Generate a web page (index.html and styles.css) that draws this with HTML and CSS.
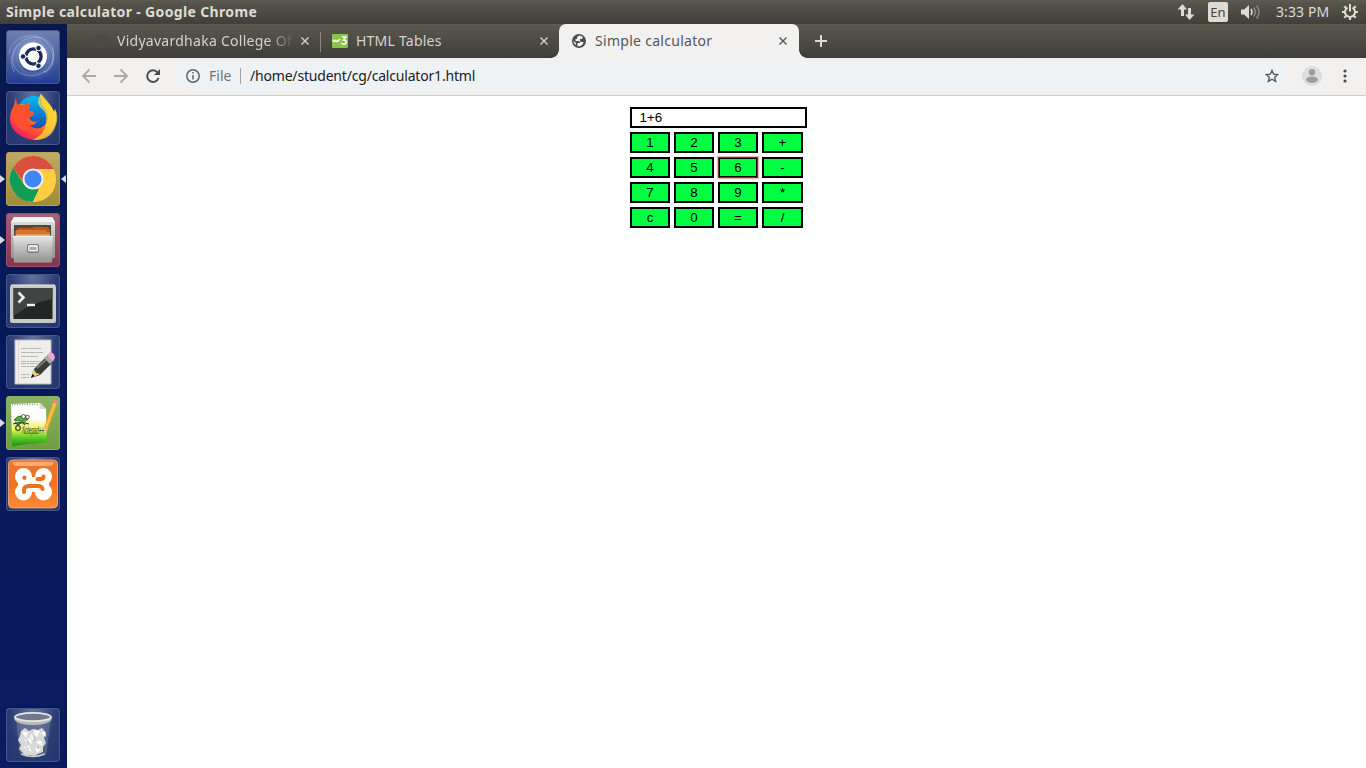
FILE: index.html
```html
<!DOCTYPE html>
<html lang="en">
<head>
<meta charset="utf-8">
<title>Simple calculator</title>
<link rel="stylesheet" href="styles.css">
</head>
<body>
<header class="panel">
  <div class="panel-title">Simple calculator - Google Chrome</div>
  <div class="indicators">
    <svg class="net" width="18" height="18" viewBox="0 0 18 18"><path d="M5.5 1 10 6.500H7V13H4V6.500H.500ZM11 5h3v6.500h3.500L12.500 17 8 11.500h3Z" fill="#dfdbd2"/></svg>
    <span class="lang">En</span>
    <svg class="vol" width="20" height="16" viewBox="0 0 20 16"><path d="M0 5.500h3L8 1v14L3 10.500H0Z" fill="#dfdbd2"/><g fill="none" stroke-width="1.500"><path d="M10 5q2 3 0 6" stroke="#dfdbd2"/><path d="M12.500 3.500q4 4.500 0 9M15.500 1.500q5 6.500 0 13" stroke="#8d8980"/></g></svg>
    <span class="clock">3:33 PM</span>
    <svg class="gear" width="16" height="16" viewBox="0 0 16 16"><g fill="none" stroke="#dfdbd2"><path d="M5.500 3.600a5 5 0 1 0 5 0" stroke-width="2"/><path d="M8 0v7.500" stroke-width="2"/><path d="M0 8h3m10 0h3M8 13v3M2.300 2.300l2 2m7.400 0 2-2M2.300 13.700l2-2m7.400 0 2 2" stroke-width="2.200"/></g></svg>
  </div>
</header>
<div class="desktop">
  <nav class="launcher">
    <div class="tile dash">
      <svg viewBox="0 0 54 54"><defs><radialGradient id="glow"><stop offset=".3" stop-color="#b9c6e8"/><stop offset="1" stop-color="#5b72b5" stop-opacity="0"/></radialGradient></defs><circle cx="27" cy="25" r="27" fill="url(#glow)" opacity=".7"/><g fill="none" stroke="#b7c4e4" stroke-opacity=".45"><path d="M3 24C5 5 31 0 41 13s7 28-4 29M46 17c6 17-9 32-26 28S4 23 14 13M8 42C-1 20 17 3 36 8M29 7c20 1 25 22 10 36"/></g><circle cx="27" cy="28" r="14.500" fill="#26428b" opacity=".5"/><circle cx="27" cy="26.500" r="14" fill="#fff"/><circle cx="27.500" cy="26.500" r="7.600" fill="none" stroke="#1c2c5c" stroke-width="3.400"/><g stroke="#fff" stroke-width="1.300"><path d="m27.500 26.500-10 0m10 0 5-9m-5 9 5 9"/></g><circle cx="27.500" cy="26.500" r="5.500" fill="#fff"/><g fill="#1c2c5c" stroke="#fff"><circle cx="17" cy="26.500" r="2.800"/><circle cx="32.500" cy="18" r="2.800"/><circle cx="32.500" cy="35.800" r="2.800"/></g></svg>
    </div>
    <div class="tile">
      <svg viewBox="0 0 54 54"><defs><linearGradient id="fox" x1=".9" y1="0" x2=".2" y2="1"><stop stop-color="#fff44f"/><stop offset=".4" stop-color="#ffac20"/><stop offset=".65" stop-color="#ff5b26"/><stop offset="1" stop-color="#f0136f"/></linearGradient><linearGradient id="globe" x2="0" y2="1"><stop stop-color="#00b9f5"/><stop offset="1" stop-color="#2044b0"/></linearGradient></defs><circle cx="28" cy="22" r="17" fill="url(#globe)"/><path d="M10 7q-1 5 2 7 4-2 7 0l5-3q-2 6-1 9l5 1q1 3-5 5 0 4 6 5l2-1q-2 5-8 4 8 7 16 0 5-6 2-14-6-7-5-12Q33 5 35 3q1 3 4 6 7 7 9 12l1-3q4 15-6 25-12 10-26 3C3 39 1 26 8 15Z" fill="url(#fox)"/><path d="M35 3q-6 8 0 14 7 5 5 15-1 11-13 17 18 1 23-15 3-9-1-16l-1 3Q46 14 35 3Z" fill="#ffd83a" opacity=".75"/><path d="m10 7 1 7q4-1 7 0l6-3q-2 6-1 9l5 1q1 3-5 5-2 6 3 11-9 5-15-2Q5 28 8 15Z" fill="#ff502e"/></svg>
    </div>
    <div class="tile gold running focused">
      <svg viewBox="0 0 54 54"><circle cx="27" cy="27" r="23" fill="#ffcd40"/><path d="M27 17H47.700A23 23 0 0 0 7 15.500l11 16Z" fill="#d85140"/><path d="m7 15.500 11 17 15 5-6 12.500A23 23 0 0 1 7 15.500Z" fill="#0f9d58"/><path d="M27 17h20.700q7 25-14 32l-7 1 9-18Z" fill="#ffcd40"/><circle cx="27" cy="27" r="10.500" fill="#f1f1f1"/><circle cx="27" cy="27" r="8.500" fill="#4285f4"/></svg>
    </div>
    <div class="tile rose running">
      <svg viewBox="0 0 54 54"><defs><linearGradient id="steel" x2="0" y2="1"><stop stop-color="#e5e5e3"/><stop offset="1" stop-color="#929290"/></linearGradient></defs><path d="M8 4h38l3 5v36H5V9Z" fill="url(#steel)"/><path d="M8 4h38l3 5H5Z" fill="#f2f2f0"/><path d="M8 12h37v12H8Z" fill="#4d4641"/><path d="m9 18 4-3h13l2-1h14l2 4v6H9Z" fill="#bd5418"/><path d="M10 20h34M10 18h30" stroke="#f29340" stroke-width="1"/><path d="M10 21.500h34V24H10Z" fill="#ffd396"/><path d="M6.500 23h41l-2 26h-37Z" fill="url(#steel)" stroke="#a3a3a1"/><path d="M6.500 23.500h41" stroke="#eee"/><rect x="21" y="31" width="12" height="9" rx="2" fill="#777"/><rect x="22" y="32" width="10" height="6.500" rx="1.500" fill="#eee"/><rect x="23.500" y="34" width="7" height="3" fill="#aaa"/></svg>
    </div>
    <div class="tile">
      <svg viewBox="0 0 54 54"><rect x="4" y="11" width="46" height="38" rx="2" fill="#c9c9c5"/><path d="M5 11h44" stroke="#eee"/><rect x="7.500" y="14" width="39" height="31" fill="#232625"/><path d="M7.500 14h39v11q-22 4-39 17Z" fill="#424444"/><path d="m12.500 18.500 5 5-5 5" fill="none" stroke="#f4f4f4" stroke-width="2.600"/><path d="M21 31h8" stroke="#f4f4f4" stroke-width="2.400"/></svg>
    </div>
    <div class="tile">
      <svg viewBox="0 0 54 54"><path d="M9 5h36v44H9Z" fill="#eeeeeb" stroke="#bbb"/><path d="M12.500 5v44" stroke="#f0bcbc" stroke-width=".7"/><path d="M15 13.500h20M15 17.500h22M15 21.500h17M15 26.500h20M15 28.500h23M15 31.500h19M15 39.500h9M15 42.500h8" stroke="#b5b5b5" stroke-dasharray="5 .5 3 .5"/><path d="m25 43 3-9 13-13 6 6-13 13Z" fill="#393b37"/><path d="m31 33 12-11" stroke="#777" stroke-width="2"/><path d="m25 43 3-9 2 4 4 1Z" fill="#e9d66d"/><path d="m25 43 1.500-4 2 2Z"/><path d="m38 23 4-4 6 6-4 4Z" fill="#aaa"/><path d="m41 20 3-3q4 0 5 6l-2 3Z" fill="#f3a6cf"/></svg>
    </div>
    <div class="tile green running">
      <svg viewBox="0 0 54 54"><defs><linearGradient id="grass" x2="0" y2="1"><stop offset=".35" stop-color="#fff"/><stop offset=".62" stop-color="#e4f252"/><stop offset=".8" stop-color="#62cc2a"/><stop offset="1" stop-color="#16930b"/></linearGradient></defs><path d="m5 8 29-1 6 6 1 33-35 4Z" fill="url(#grass)"/><path d="M33.500 7v6H40Z" fill="#d5dcd3"/><path d="M6 8.500h27" stroke="#999" stroke-width="1.500" stroke-dasharray="1 1.500"/><path d="M8 24q4-5 9-4 4-1 5 3-2 3-6 2-5 0-8-1Z" fill="#59ad38" stroke="#2c6e27"/><circle cx="17.500" cy="20.500" r="2" fill="#fff" stroke="#333" stroke-width=".8"/><circle cx="21.500" cy="21" r="1.800" fill="#fff" stroke="#333" stroke-width=".8"/><path d="M7 28q8-3 16 0M9 26l3 3 4-3 3 3" fill="none" stroke="#38512f" stroke-width="1.300"/><circle cx="12" cy="32" r="2.300" fill="none" stroke="#38512f" stroke-width="1.300"/><text x="16" y="38" class="note-name" textLength="22" lengthAdjust="spacingAndGlyphs">Notepad++</text><path d="m38 32 9-26 4 2-9 25-4 4Z" fill="#f6a829"/><path d="m40 32 9-25" stroke="#ffda65"/><path d="m47 6 1-3 4 2-1 3Z" fill="#e6858b"/><path d="m38 32 0 6 4-5Z" fill="#e9ca99"/></svg>
    </div>
    <div class="tile">
      <svg viewBox="0 0 54 54"><defs><linearGradient id="orange" x2="0" y2="1"><stop stop-color="#e9792f"/><stop offset=".5" stop-color="#f4701f"/><stop offset="1" stop-color="#fb8b38"/></linearGradient></defs><rect x="2.500" y="3" width="49" height="48" rx="4" fill="url(#orange)" stroke="#dba47f"/><path d="M7 5h40q1 3-3 4H10Q6 8 7 5Z" fill="#ffc092" opacity=".7"/><g fill="#fff"><circle cx="17.500" cy="19.500" r="8.500"/><circle cx="37.500" cy="19.500" r="8.500"/><circle cx="17.500" cy="35" r="8.500"/><circle cx="37.500" cy="35" r="8.500"/><path d="M12 20h31v15H12Z"/></g><path d="M18.500 20.500v.5M31.500 22h3q3 0 3-2.500M18 35v-2q0-4 5-4h9q4 0 4.500 3" fill="none" stroke="#f4701f" stroke-width="4" stroke-linecap="round"/></svg>
    </div>
    <div class="tile trash">
      <svg viewBox="0 0 54 54"><path d="m11 12 3 33q13 7 26 0l4-33Z" fill="#96a6bf" opacity=".3" stroke="#a8b5cb"/><path d="m15 23 4-3 4 3 4-2 5 1 4-2 4 5-2 5 2 5-3 4v5l-5 2-4 2-4-1-5 1-3-4-3-3 2-4-3-5 2-4Z" fill="#d8dad9"/><g fill="#fbfbf9"><path d="m16 24 6 0-2 6Zm12-2 6 1-3 6-3-2Zm7 3 4-2 1 6ZM18 32l7-3 1 7Zm12 2 7-3-2 7Zm-13 5 6-1 3 6Zm12 1 6 1-4 4Zm-3-14-3 4 5 2Z"/></g><path d="m21 31 2 5m5-9 1 6m5-2 3 2m-17 6 3 2m10-4-1 4" stroke="#b4b9bb"/><ellipse cx="27" cy="9" rx="18.500" ry="4.500" fill="#6f7990"/><path d="M8.500 8v4q4 5 18.500 5t18.500-5V8q-4 5-18.500 5T8.500 8Z" fill="#babcb9"/><ellipse cx="27" cy="9" rx="18" ry="4.200" fill="none" stroke="#e5e6e3" stroke-width="1.800"/><path d="M15 46q12 5 24 0" fill="none" stroke="#c7cac9" stroke-width="1.500"/></svg>
    </div>
  </nav>
  <main class="browser">
    <div class="tabs">
      <div class="tab tab-college">
        <span class="loading"></span><span class="tab-label college">Vidyavardhaka College Of</span>
        <svg class="close" viewBox="0 0 8 8"><path d="m.5.5 7 7m0-7-7 7"/></svg>
      </div>
      <div class="tab tab-tables">
        <svg class="w3" viewBox="0 0 16 14"><rect width="16" height="14" rx="1" fill="#8bc34a"/><path d="M1 5.500v1q1 2 2.500 0V5.500v1q2 2 3 0L8 5M10 3h4l-2.500 3q3.500 0 2.500 3Q12 11.500 9.500 9" fill="none" stroke="#fff" stroke-width="1.400"/></svg>
        <span class="tab-label tables">HTML Tables</span>
        <svg class="close" viewBox="0 0 8 8"><path d="m.5.5 7 7m0-7-7 7"/></svg>
      </div>
      <div class="tab active">
        <svg class="world" viewBox="0 0 14 14"><circle cx="7" cy="7" r="7" fill="#4b4d4f"/><path d="M7.500 1.500 5 3v2H3.500v2H7l1 1v1H5.500v3q5 1 6-4H9L8 7V5h2l1-2Q9 1.500 7.500 1.500ZM1.500 7 4 9v2Q1 9 1.500 7Z" fill="#f2f1f0"/></svg>
        <span class="tab-label simple">Simple calculator</span>
        <svg class="close" viewBox="0 0 8 8"><path d="m.5.5 7 7m0-7-7 7"/></svg>
      </div>
      <svg class="plus" viewBox="0 0 12 12"><path d="M6 0v12M0 6h12"/></svg>
    </div>
    <div class="toolbar">
      <svg class="nav-icons" width="82" height="16" viewBox="0 0 82 16"><g fill="none" stroke="#aaa9a7" stroke-width="1.800"><path d="M15 8H2m6.500-6.500L2 8l6.500 6.500M33 8h13m-6.500-6.500L46 8l-6.500 6.500"/></g><path d="M76.500 4.500A5.800 5.800 0 1 0 77.500 10" fill="none" stroke="#4d4e50" stroke-width="2"/><path d="M79 1v6h-6Z" fill="#4d4e50"/></svg>
      <div class="omnibox">
        <svg class="info" width="14" height="14" viewBox="0 0 14 14"><circle cx="7" cy="7" r="6.200" fill="none" stroke="#5f6368" stroke-width="1.500"/><path d="M7 6v4.500M7 3v1.600" stroke="#5f6368" stroke-width="1.500"/></svg>
        <span class="scheme">File</span><span class="divider"></span><span class="url">/home/student/cg/calculator1.html</span>
        <svg class="star" width="14" height="14" viewBox="0 0 14 14"><path d="m7 1.500 1.700 3.700 4 .4-3 2.700.9 4L7 10.200l-3.600 2.100.9-4-3-2.700 4-.4Z" fill="none" stroke="#54575b" stroke-width="1.400"/></svg>
      </div>
      <svg class="avatar" width="20" height="20" viewBox="0 0 20 20"><circle cx="10" cy="10" r="10" fill="#dedddd"/><circle cx="10" cy="6.200" r="3.200" fill="#9d9d9d"/><ellipse cx="10" cy="13.700" rx="5.800" ry="3.100" fill="#9d9d9d"/></svg>
      <svg class="menu" width="4" height="14" viewBox="0 0 4 14"><g fill="#4c4d4f"><circle cx="2" cy="2" r="1.600"/><circle cx="2" cy="7" r="1.600"/><circle cx="2" cy="12" r="1.600"/></g></svg>
    </div>
    <section class="page">
      <form class="calculator">
        <input class="display" type="text" value="1+6" aria-label="Result">
        <div class="keys">
          <button class="key" type="button">1</button><button class="key" type="button">2</button><button class="key" type="button">3</button><button class="key" type="button">+</button>
          <button class="key" type="button">4</button><button class="key" type="button">5</button><button class="key pressed" type="button">6</button><button class="key" type="button">-</button>
          <button class="key" type="button">7</button><button class="key" type="button">8</button><button class="key" type="button">9</button><button class="key" type="button">*</button>
          <button class="key" type="button">c</button><button class="key" type="button">0</button><button class="key" type="button">=</button><button class="key" type="button">/</button>
        </div>
      </form>
    </section>
  </main>
</div>
</body>
</html>
```
FILE: styles.css
```css
* { box-sizing: border-box; }
body { margin: 0; width: 1366px; height: 768px; overflow: hidden; display: flex; flex-direction: column; background: #fff; font: 14px "Noto Sans", sans-serif; }
svg { display: block; flex-shrink: 0; }
.panel { height: 24px; display: flex; align-items: center; justify-content: space-between; padding-left: 6px; color: #dfdbd2; background: linear-gradient(#5e5b50, #55534b 15%, #403f3a); }
.panel-title { font-weight: 700; font-size: 14px; line-height: 24px; letter-spacing: .35px; white-space: nowrap; }
.indicators { display: flex; align-items: center; height: 24px; width: 189px; }
.lang { width: 20px; height: 20px; margin-left: 13px; border-radius: 2px; background: #dfdbd2; color: #45443f; font-size: 13px; line-height: 20px; text-align: center; }
.vol { margin-left: 13px; }
.clock { margin-left: 15px; width: 54px; line-height: 18px; padding-bottom: 1px; white-space: nowrap; letter-spacing: .1px; }
.gear { margin-left: 12px; }
.desktop { height: 744px; display: flex; }
.launcher { width: 67px; padding: 6px; display: flex; flex-direction: column; gap: 7px; background: linear-gradient(90deg, transparent 65px, #09184a 66px), linear-gradient(#07194d, #08195b 45%, #0b1b60); }
.tile { width: 54px; height: 54px; flex-shrink: 0; position: relative; border-radius: 4px; background: radial-gradient(ellipse at 50% 0, #66749b, #2c3d76 60%, #24356f); box-shadow: inset 0 0 0 1px #465789, 0 0 2px #061039; }
.tile svg { width: 54px; height: 54px; }
.dash { background: linear-gradient(#7181b0, #203e93); overflow: hidden; }
.gold { background: linear-gradient(#c0aa65, #a18b39); box-shadow: inset 0 0 0 1px #b6a25c; }
.rose { background: linear-gradient(#a46378, #87324c); box-shadow: inset 0 0 0 1px #9a5068; }
.green { background: linear-gradient(#8cb463, #6d9d40); box-shadow: inset 0 0 0 1px #8aae66; }
.trash { margin-top: auto; }
.running::before { content: ""; position: absolute; left: -6px; top: 23px; border-left: 5px solid #d8d8de; border-top: 4px solid transparent; border-bottom: 4px solid transparent; }
.focused::after { content: ""; position: absolute; right: -6px; top: 23px; border-right: 5px solid #d8d8de; border-top: 4px solid transparent; border-bottom: 4px solid transparent; }
.note-name { font: italic 10px "Liberation Sans", sans-serif; fill: #264824; }
.browser { width: 1299px; display: flex; flex-direction: column; }
.tabs { height: 34px; display: flex; align-items: center; background: linear-gradient(#69614f 0, #5a574e 1px, #403e3a); }
.tab { height: 34px; display: flex; align-items: center; color: #d7d2c9; position: relative; }
.tab-college { width: 253px; padding: 0 11px 0 27px; }
.tab-college::after { content: ""; position: absolute; right: -1px; top: 8px; width: 1px; height: 20px; background: #8b887f; }
.tab-tables { width: 239px; padding: 0 11px 0 12px; }
.active { width: 240px; padding: 0 12px 0 13px; background: #f2f1f0; border-radius: 7px 7px 0 0; color: #53565a; }
.active::before, .active::after { content: ""; position: absolute; bottom: 0; width: 8px; height: 8px; }
.active::before { left: -8px; background: radial-gradient(circle at 0 0, transparent 7.5px, #f2f1f0 8px); }
.active::after { right: -8px; background: radial-gradient(circle at 100% 0, transparent 7.5px, #f2f1f0 8px); }
.tab-label { white-space: nowrap; overflow: hidden; line-height: 20px; }
.loading { width: 14px; height: 14px; border-radius: 50%; background: #4b4a46; margin-right: 9px; flex-shrink: 0; }
.college { width: 178px; letter-spacing: .27px; -webkit-mask-image: linear-gradient(90deg, #000 150px, transparent 178px); }
.tables { letter-spacing: .22px; }
.simple { letter-spacing: .29px; }
.w3 { width: 16px; height: 14px; margin-right: 8px; }
.world { width: 14px; height: 14px; margin-right: 9px; }
.close { width: 8px; height: 8px; margin-left: auto; fill: none; stroke: currentColor; stroke-width: 1.4; }
.plus { width: 12px; height: 12px; margin-left: 16px; fill: none; stroke: #dfdbd2; stroke-width: 2; }
.toolbar { height: 38px; display: flex; align-items: center; background: #f2f1f0; border-bottom: 1px solid #cfcecc; padding: 0 0 1px 14px; }
.omnibox { width: 1115px; height: 30px; display: flex; align-items: center; margin-left: 12px; border-radius: 15px; background: #eff2f4; padding: 0 11px; color: #202124; }
.scheme { margin-left: 9px; width: 24px; padding-bottom: 1px; color: #707377; }
.divider { width: 1px; height: 16px; margin: 0 9px 0 7px; background: #a0a3a5; }
.url { white-space: nowrap; padding-bottom: 1px; letter-spacing: -.19px; }
.star { margin-left: auto; }
.avatar { margin-left: 12px; }
.menu { margin-left: 21px; }
.page { height: 672px; padding: 11px 0 0 563px; }
.calculator { width: 177px; }
.display { display: block; width: 177px; height: 21px; border: 2px solid #000; padding: 1px 8px 1px 7.5px; background: #fff; color: #000; font: 13.333px "Liberation Sans", Arial, sans-serif; }
.keys { display: grid; grid-template-columns: 40px 40px 40px 41px; gap: 4px; margin-top: 4px; }
.key { height: 21px; border: 2px solid #000; padding: 0; background: #00ff40; color: #000; font: 13.333px "Liberation Sans", Arial, sans-serif; text-align: center; }
.pressed { border: 1px solid #6b3a2c; box-shadow: 0 0 1px 1px #f0b9a8, inset 0 0 0 1px #000; }
```
